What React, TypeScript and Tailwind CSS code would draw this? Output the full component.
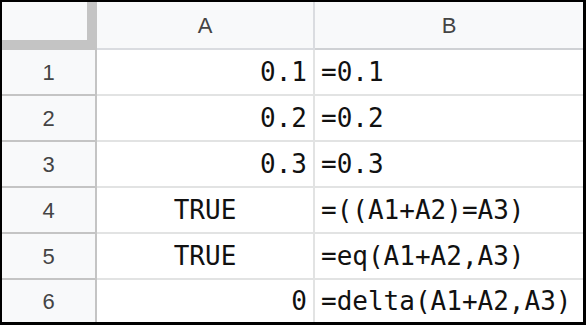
import React from 'react';

type Row = {
  n: number;
  a: string;
  aAlign: 'right' | 'center';
  b: string;
};

const rows: Row[] = [
  { n: 1, a: '0.1', aAlign: 'right', b: '=0.1' },
  { n: 2, a: '0.2', aAlign: 'right', b: '=0.2' },
  { n: 3, a: '0.3', aAlign: 'right', b: '=0.3' },
  { n: 4, a: 'TRUE', aAlign: 'center', b: '=((A1+A2)=A3)' },
  { n: 5, a: 'TRUE', aAlign: 'center', b: '=eq(A1+A2,A3)' },
  { n: 6, a: '0', aAlign: 'right', b: '=delta(A1+A2,A3)' },
];

const mono = "[font-family:'DejaVu_Sans_Mono',monospace]";
const head = "[font-family:'Liberation_Sans',Arial,sans-serif]";

const App = () => {
  return (
    <div className="w-[586px] h-[325px] bg-black pt-[2px] pl-[2px] pr-[3px] pb-[3px]">
      <div className="w-[581px] h-[320px] bg-white flex flex-col overflow-hidden">
        {/* Column headers */}
        <div className="flex h-[48px] shrink-0">
          <div className="w-[95px] h-[48px] bg-[#f8f9fa] border-r-[10px] border-b-[10px] border-[#c4c4c4]" />
          <div className={`w-[218px] h-[48px] bg-[#f8f9fa] border-r-2 border-b-2 border-[#dadce0] flex items-center justify-center text-[22px] text-[#444] ${head}`}>
            A
          </div>
          <div className={`flex-1 h-[48px] bg-[#f8f9fa] border-b-2 border-[#cfd1d4] flex items-center justify-center text-[22px] text-[#444] ${head}`}>
            B
          </div>
        </div>

        {/* Rows */}
        {rows.map((r, i) => {
          const last = i === rows.length - 1;
          return (
            <div key={r.n} className={`flex shrink-0 ${last ? 'h-[42px]' : 'h-[46px]'}`}>
              <div
                className={`w-[95px] bg-[#f8f9fa] border-r-2 border-[#c4c4c4] flex items-center justify-center text-[22px] text-[#444] ${head} ${last ? '' : 'border-b-2'}`}
              >
                {r.n}
              </div>
              <div
                className={`w-[218px] border-r-2 border-[#e2e3e3] flex items-center text-[26px] text-[#111] ${mono} ${
                  r.aAlign === 'right' ? 'justify-end pr-[6px]' : 'justify-center'
                } ${last ? '' : 'border-b-2'}`}
              >
                {r.a}
              </div>
              <div
                className={`flex-1 border-[#e2e3e3] flex items-center pl-[6px] text-[26px] text-[#111] whitespace-nowrap ${mono} ${last ? '' : 'border-b-2'}`}
              >
                {r.b}
              </div>
            </div>
          );
        })}
      </div>
    </div>
  );
};

export default App;
